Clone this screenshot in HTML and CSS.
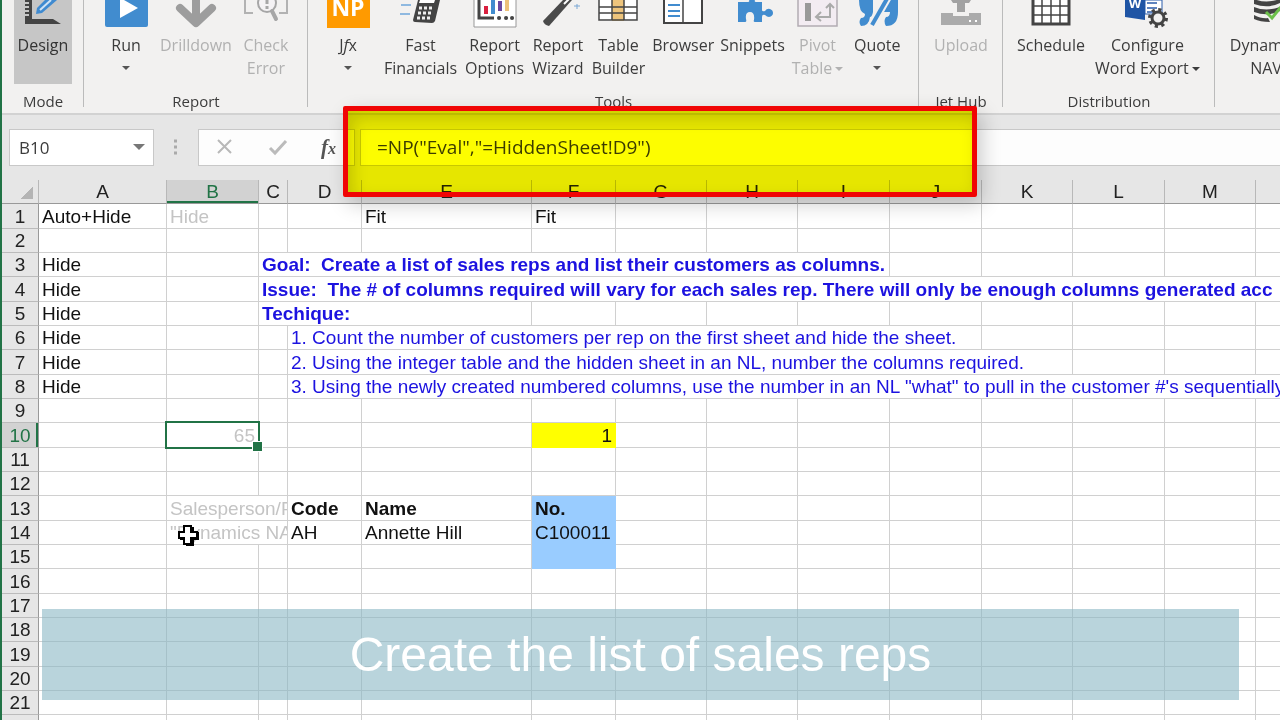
FILE: index.html
```html
<!DOCTYPE html>
<html lang="en">
<head>
<meta charset="UTF-8">
<meta name="viewport" content="width=device-width, initial-scale=1.0">
<title>Create the list of sales reps</title>
<link rel="stylesheet" href="styles.css">
</head>
<body>

<div class="app">

    <div class="ribbon">
        <div class="group group-mode">
            <div class="tools">
                <button class="tool active">
                    <svg width="44" height="28" viewBox="0 0 44 28">
                        <path d="M4 0h7v19h21l8 5H4z" fill="#444"/>
                        <path d="M4 3h4M4 7h4M4 11h4M4 15h4" stroke="#c6c6c6" stroke-width="2"/>
                        <path d="M16 8L24 0h12L21 13l-6 1z" fill="#3f8ad0"/>
                        <path d="M19 10L30 0" stroke="#cfe2f4" stroke-width="2"/>
                    </svg>
                    <span>Design</span>
                </button>
            </div>
            <div class="group-name">Mode</div>
        </div>

        <div class="group group-report">
            <div class="tools">
                <button class="tool w-run">
                    <svg width="44" height="28" viewBox="0 0 44 28">
                        <path d="M1 0h43v25q0 2-2 2H3q-2 0-2-2z" fill="#418ccf"/>
                        <path d="M16 0h4l14 8-18 10z" fill="#fff"/>
                    </svg>
                    <span>Run</span>
                    <span class="arrow"></span>
                </button>
                <button class="tool" disabled>
                    <svg width="44" height="28" viewBox="0 0 44 28">
                        <path d="M22 0v20M6 8l16 15L38 8" fill="none" stroke="#9d9d9d" stroke-width="8" stroke-linejoin="round" stroke-linecap="round"/>
                    </svg>
                    <span>Drilldown</span>
                </button>
                <button class="tool w-check" disabled>
                    <svg width="44" height="28" viewBox="0 0 44 28">
                        <path d="M1 0v13h8M35 13h8V0" fill="none" stroke="#b2b2b2" stroke-width="2"/>
                        <circle cx="23" cy="3" r="9" fill="#f4f2f4" stroke="#a6a6a6" stroke-width="2"/>
                        <path d="M28 11l4 8" stroke="#a6a6a6" stroke-width="4" stroke-linecap="round"/>
                        <path d="M23 0v4M23 6v3" stroke="#a6a6a6" stroke-width="3"/>
                    </svg>
                    <span>Check<br>Error</span>
                </button>
            </div>
            <div class="group-name">Report</div>
        </div>

        <div class="group group-tools">
            <div class="tools">
                <button class="tool w-jfx">
                    <svg width="44" height="28" viewBox="0 0 44 28">
                        <path d="M1 0h43v28H1z" fill="#ff9a00"/>
                        <text x="22" y="16" text-anchor="middle" class="np">NP</text>
                    </svg>
                    <span>J<i>f</i>x</span>
                    <span class="arrow"></span>
                </button>
                <button class="tool">
                    <svg width="44" height="28" viewBox="0 0 44 28">
                        <path d="M19 0h22l-5 21q-1 2-3 2l-17-1q-2 0-2-2z" fill="#444"/>
                        <path d="M21 0h15l-1 3H20z" fill="#fff"/>
                        <path d="M20 8h13M19 13h13M18 18h13" stroke="#eee" stroke-width="3" stroke-dasharray="3 2"/>
                        <path d="M2 5h10M1 14h10" stroke="#8fb9e0" stroke-width="2"/>
                    </svg>
                    <span>Fast<br>Financials</span>
                </button>
                <button class="tool">
                    <svg width="44" height="28" viewBox="0 0 44 28">
                        <path d="M1 -2h42v29H1z" fill="#fff" stroke="#999"/>
                        <path d="M6 0v18h15" fill="none" stroke="#444" stroke-width="3"/>
                        <path d="M13 6v8" stroke="#d9203f" stroke-width="4"/>
                        <path d="M20 0v14" stroke="#418ccf" stroke-width="4"/>
                        <path d="M27 1v10" stroke="#6b46a0" stroke-width="4"/>
                        <path d="M34 0v11" stroke="#eec27a" stroke-width="4"/>
                        <path d="M26 18h.1M33 18h.1M39 18h.1" stroke="#444" stroke-width="4" stroke-linecap="round"/>
                    </svg>
                    <span>Report<br>Options</span>
                </button>
                <button class="tool">
                    <svg width="44" height="28" viewBox="0 0 44 28">
                        <path d="M7 21L27 0h9L13 26q-5-1-6-5z" fill="#4a4a4a"/>
                        <path d="M28 4l5-5" stroke="#fff" stroke-width="2"/>
                        <path d="M41 4v5M38 6h6" stroke="#7ba7d4"/>
                    </svg>
                    <span>Report<br>Wizard</span>
                </button>
                <button class="tool">
                    <svg width="44" height="28" viewBox="0 0 44 28">
                        <path d="M3 -2h38v23H3z" fill="#fff"/>
                        <path d="M16 0h12v21H16z" fill="#edc47c"/>
                        <path d="M3 -2v22h38V-2M3 7h38M3 13h38M16 0v20M28 0v20" fill="none" stroke="#444" stroke-width="1.5"/>
                    </svg>
                    <span>Table<br>Builder</span>
                </button>
                <button class="tool tight">
                    <svg width="44" height="28" viewBox="0 0 44 28">
                        <path d="M3 -2h38v25H3z" fill="#fff" stroke="#444" stroke-width="2"/>
                        <path d="M22 0v23" stroke="#444" stroke-width="1.5"/>
                        <path d="M7 5h12M7 11h12M7 16h12" stroke="#418ccf" stroke-width="2"/>
                    </svg>
                    <span>Browser</span>
                </button>
                <button class="tool tight">
                    <svg width="44" height="28" viewBox="0 0 44 28">
                        <path d="M7 2h10q2 0 1-2h6q-1 2 1 2h6v8q0 2 3 1 2-3 5-2 3 1 3 4t-4 4q-2 0-4-2-3-1-3 2v5H24q-2 0-1-2 1-8-4-8t-4 7q1 3-1 3H7z" fill="#418ccf"/>
                    </svg>
                    <span>Snippets</span>
                </button>
                <button class="tool" disabled>
                    <svg width="44" height="28" viewBox="0 0 44 28">
                        <path d="M2 -2h39v28H2z" fill="#f3ecf2" stroke="#b3acb3" stroke-width="1.5"/>
                        <path d="M12 3v18" stroke="#999" stroke-width="6"/>
                        <path d="M34 4v13H21M30 8l4-4 4 4M25 12l-5 5 5 4" fill="none" stroke="#aaa" stroke-width="2"/>
                    </svg>
                    <span>Pivot<br>Table<span class="arrow inline"></span></span>
                </button>
                <button class="tool w-quote">
                    <svg width="44" height="28" viewBox="0 0 44 28">
                        <path d="M4 0h14v12q-1 5-3 5-1 9-9 9-3-4 0-8 4 0 4-4-6-2-6-14z" fill="#418ccf"/>
                        <path d="M27 0h16v12q0 14-12 14-3-5 0-9 4 0 4-5h-8z" fill="#418ccf"/>
                        <path d="M33 -3L17 25" stroke="#f2f1f0" stroke-width="8"/>
                        <path d="M33 -3L17 25" stroke="#418ccf" stroke-width="4"/>
                    </svg>
                    <span>Quote</span>
                    <span class="arrow"></span>
                </button>
            </div>
            <div class="group-name">Tools</div>
        </div>

        <div class="group group-hub">
            <div class="tools">
                <button class="tool" disabled>
                    <svg width="44" height="28" viewBox="0 0 44 28">
                        <path d="M2 13h12v3h16v-3h12v12H2z" fill="#ababab"/>
                        <path d="M12 0h20l-2 3h-4v9h-8V3h-4z" fill="#a2a2a2"/>
                        <path d="M30 21h2M36 21h2" stroke="#fff" stroke-width="2"/>
                    </svg>
                    <span>Upload</span>
                </button>
            </div>
            <div class="group-name">Jet Hub</div>
        </div>

        <div class="group group-distribution">
            <div class="tools">
                <button class="tool w-schedule">
                    <svg width="44" height="28" viewBox="0 0 44 28">
                        <path d="M4 -3h36v27H4z" fill="#fff" stroke="#444" stroke-width="3"/>
                        <path d="M4 6h36M4 15h36M13 0v24M22 0v24M31 0v24" stroke="#444" stroke-width="1.5"/>
                    </svg>
                    <span>Schedule</span>
                </button>
                <button class="tool">
                    <svg width="44" height="28" viewBox="0 0 44 28">
                        <path d="M20 0h17v14H20z" fill="#fff" stroke="#2b5caa"/>
                        <path d="M22 3h10M22 8h10M22 12h8" stroke="#2b5caa" stroke-width="1.5"/>
                        <path d="M0 0h20v20L0 17z" fill="#1f55a5"/>
                        <text x="10" y="8" text-anchor="middle" class="word-mark">W</text>
                        <circle cx="33" cy="18" r="8" fill="none" stroke="#444" stroke-width="4" stroke-dasharray="3 3.28"/>
                        <circle cx="33" cy="18" r="6" fill="#f2f1f0" stroke="#444" stroke-width="3"/>
                    </svg>
                    <span>Configure<br>Word Export<span class="arrow inline"></span></span>
                </button>
            </div>
            <div class="group-name">Distribution</div>
        </div>

        <div class="group group-nav">
            <div class="tools">
                <button class="tool">
                    <svg width="44" height="28" viewBox="0 0 44 28">
                        <path d="M10 -1q12 5 26 0v4q-12 6-26 1zM10 7q12 5 26 0v4q-12 6-26 1zM10 15q8 4 14 3l2 4q-10 0-16-3z" fill="#444"/>
                        <path d="M22 12l6 6L41 2" fill="none" stroke="#6cc04a" stroke-width="3"/>
                    </svg>
                    <span>Dynamics<br>NAV</span>
                </button>
            </div>
        </div>
    </div>

    <div class="formula-bar">
        <div class="name-box">
            <input type="text" value="B10" aria-label="Name box">
            <button aria-label="Named ranges"><span class="arrow big"></span></button>
        </div>
        <svg class="dots" width="4" height="18" viewBox="0 0 4 18"><path d="M0 3h3M0 9h3M0 15h3" stroke="#aaa" stroke-width="3"/></svg>
        <div class="formula-buttons">
            <button aria-label="Cancel">
                <svg width="20" height="20" viewBox="0 0 20 20"><path d="M3 3l13 13M16 3L3 16" stroke="#b8b8b8" stroke-width="2"/></svg>
            </button>
            <button aria-label="Enter">
                <svg width="20" height="20" viewBox="0 0 20 20"><path d="M2 11l5 5L18 4" fill="none" stroke="#bbb" stroke-width="3"/></svg>
            </button>
            <button class="fx" aria-label="Insert function">f<small>x</small></button>
        </div>
        <input class="formula" type="text" value='=NP("Eval","=HiddenSheet!D9")' aria-label="Formula">
    </div>

    <table class="sheet" id="sheet">
        <colgroup>
            <col class="c-head"><col class="c-a"><col class="c-b"><col class="c-c"><col class="c-d"><col class="c-e"><col class="c-f">
            <col class="c-91"><col class="c-91"><col class="c-92"><col class="c-92"><col class="c-91"><col class="c-92"><col class="c-91"><col class="c-92">
        </colgroup>
        <thead>
            <tr>
                <th class="corner"></th>
                <th>A</th><th class="selected">B</th><th>C</th><th>D</th><th>E</th><th>F</th><th>G</th>
                <th>H</th><th>I</th><th>J</th><th>K</th><th>L</th><th>M</th><th>N</th>
            </tr>
        </thead>
        <tbody></tbody>
    </table>

    <svg class="cursor" width="24" height="24" viewBox="0 0 24 24">
        <path d="M9 3h8v5h5v8h-5v6H9v-6H3V9h6z" fill="#000"/>
        <path d="M7 2h7v6h6v6h-6v6H7v-6H2V8h5z" fill="#fff" stroke="#000" stroke-width="2"/>
    </svg>

    <div class="highlight"></div>
    <div class="caption">Create the list of sales reps</div>
</div>

<script>
    // filled cells: row -> column -> [text, class, colspan]
    var cells = {
        1: { A: ["Auto+Hide"], B: ["Hide", "dim"], E: ["Fit"], F: ["Fit"] },
        3: { A: ["Hide"], C: ["Goal:  Create a list of sales reps and list their customers as columns.", "note bold", 7] },
        4: { A: ["Hide"], C: ["Issue:  The # of columns required will vary for each sales rep. There will only be enough columns generated acc", "note bold", 12] },
        5: { A: ["Hide"], C: ["Techique:", "note bold", 3] },
        6: { A: ["Hide"], D: ["1. Count the number of customers per rep on the first sheet and hide the sheet.", "note", 7] },
        7: { A: ["Hide"], D: ["2. Using the integer table and the hidden sheet in an NL, number the columns required.", "note", 8] },
        8: { A: ["Hide"], D: ["3. Using the newly created numbered columns, use the number in an NL \"what\" to pull in the customer #'s sequentially i", "note", 11] },
        10: { B: ["65", "dim number current"], F: ["1", "number yellow"] },
        13: { B: ["Salesperson/P", "dim", 2], D: ["Code", "bold"], E: ["Name", "bold"], F: ["No.", "bold blue"] },
        14: { B: ["\"Dynamics NA", "dim", 2], D: ["AH"], E: ["Annette Hill"], F: ["C100011", "blue"] },
        15: { F: ["", "blue"] }
    };
    var letters = "ABCDEFGHIJKLMN";
    var body = document.querySelector("#sheet tbody");

    for (var r = 1; r <= 22; r++) {
        var row = body.insertRow();
        var head = document.createElement("th");
        head.textContent = r;
        if (r === 10) head.className = "selected";
        row.appendChild(head);

        for (var c = 0; c < letters.length; c++) {
            var cell = row.insertCell();
            var data = (cells[r] || {})[letters[c]];
            if (!data) continue;
            cell.textContent = data[0];
            cell.className = data[1] || "";
            if (data[2]) {
                cell.colSpan = data[2];
                c += data[2] - 1;
            }
        }
    }
</script>

</body>
</html>
```
FILE: styles.css
```css
* {
    box-sizing: border-box;
}
body {
    margin: 0;
    font-family: "Open Sans", "Noto Sans", sans-serif;
    color: #3c3c3c;
    background-color: #fff;
}
button, input {
    font: inherit;
    color: inherit;
    border: none;
    background: none;
    padding: 0;
    margin: 0;
}
.app {
    position: relative;
    height: 100vh;
    overflow: hidden;
    border-left: 2px solid #217346;
}

/* ribbon */
.ribbon {
    display: flex;
    height: 113px;
    overflow: hidden;
    background-color: #f2f1f0;
    font-size: 16px;
    line-height: 23px;
}
.group {
    flex: none;
    position: relative;
    display: flex;
    flex-direction: column;
    justify-content: space-between;
}
.group::after {
    content: "";
    position: absolute;
    right: 0;
    top: 0;
    height: 107px;
    border-right: 1px solid #bbb;
}
.group-mode {
    width: 82px;
}
.group-report {
    width: 224px;
}
.group-tools {
    width: 611px;
}
.group-hub {
    width: 84px;
}
.group-distribution {
    width: 212px;
}
.group-nav {
    width: 102px;
}
.group-name {
    text-align: center;
    font-size: 15px;
}
.tools {
    display: flex;
    justify-content: center;
}
.group-report .tools {
    justify-content: flex-start;
    padding-left: 12px;
}
.group-tools .tools,
.group-distribution .tools {
    justify-content: flex-start;
    padding-left: 8px;
}
.tool {
    display: flex;
    flex-direction: column;
    align-items: center;
    height: 84px;
    padding: 0 4px;
    white-space: nowrap;
    line-height: 23px;
}
.tool.tight {
    padding: 0 3px;
}
.tool svg {
    flex: none;
    margin-bottom: 6px;
}
.tool.active {
    background-color: #c6c6c6;
    color: #333;
}
.tool:disabled {
    color: #b1b1b1;
}
.w-run, .w-check, .w-quote {
    width: 60px;
}
.w-jfx {
    width: 64px;
}
.w-schedule {
    width: 80px;
}
.np {
    font: bold 23px "Open Sans", sans-serif;
    fill: #fff;
}
.word-mark {
    font: bold 13px "Open Sans", sans-serif;
    fill: #fff;
}
.arrow {
    margin-top: 9px;
    border: 4px solid transparent;
    border-top-color: #555;
    border-bottom: none;
}
.arrow.inline {
    display: inline-block;
    margin: 0 0 3px 3px;
    border-top-color: currentColor;
}
.arrow.big {
    display: block;
    margin: 0;
    border-width: 6px 6px 0;
    border-top-color: #777;
}

/* formula bar */
.formula-bar {
    display: flex;
    align-items: center;
    height: 67px;
    padding: 0 0 1px 7px;
    background-color: #e6e6e6;
    border-top: 2px solid #d2d2d2;
}
.name-box {
    display: flex;
    align-items: center;
    width: 145px;
    height: 37px;
    background-color: #fff;
    border: 1px solid #c8c8c8;
}
.name-box input {
    flex: 1;
    min-width: 0;
    padding-left: 9px;
    font-size: 17px;
}
.name-box button {
    padding: 0 8px;
}
.dots {
    margin: 0 20px;
}
.formula-buttons {
    display: flex;
    align-items: center;
    justify-content: space-between;
    width: 157px;
    height: 37px;
    padding: 0 18px 0 16px;
    background-color: #fdfdfd;
    border: 1px solid #c8c8c8;
}
.formula-buttons svg {
    display: block;
}
.fx {
    font: italic bold 21px "Liberation Serif", serif;
    color: #555;
}
.fx small {
    font-size: 16px;
}
.formula {
    flex: 1;
    height: 37px;
    margin-left: 5px;
    padding-left: 16px;
    background-color: #fdfdfd;
    border: 1px solid #c8c8c8;
    border-right: none;
    font-size: 19px;
}

/* worksheet */
.sheet {
    width: 100%;
    table-layout: fixed;
    border-collapse: separate;
    border-spacing: 0;
    font-family: "Liberation Sans", Arial, sans-serif;
    font-size: 19px;
    line-height: 23px;
    color: #111;
}
.c-head { width: 37px; }
.c-a { width: 128px; }
.c-b { width: 92px; }
.c-c { width: 29px; }
.c-d { width: 74px; }
.c-e { width: 170px; }
.c-f { width: 84px; }
.c-91 { width: 91px; }
.c-92 { width: 92px; }
.sheet tr {
    height: 24px;
}
.sheet tbody tr:nth-child(3n+1) {
    height: 25px;
}
.sheet td, .sheet th {
    padding: 0;
    border-right: 1px solid #d0d0d0;
    border-bottom: 1px solid #d0d0d0;
    white-space: pre;
    overflow: hidden;
}
.sheet th {
    background-color: #e6e6e6;
    font-weight: normal;
    text-align: center;
    color: #222;
}
.sheet thead th {
    border-right: 1px solid #b8b8b8;
    border-bottom-color: #999;
}
.sheet tbody th {
    border-right-color: #999;
    border-bottom-color: #bbb;
}
.sheet .corner {
    background: linear-gradient(135deg, transparent 50%, #b4b4b4 50%) 18px 6px / 13px 13px no-repeat #e6e6e6;
}
.sheet thead .selected {
    background-color: #d2d2d2;
    color: #217346;
    box-shadow: inset 0 -2px #217346;
}
.sheet tbody .selected {
    background-color: #d2d2d2;
    color: #217346;
    box-shadow: inset -2px 0 #217346;
}
.sheet td {
    padding-left: 3px;
}
.sheet .dim {
    color: #c4c4c4;
}
.sheet .bold {
    font-weight: bold;
}
.sheet .note {
    color: #1c12e0;
}
.sheet .number {
    text-align: right;
    padding-right: 3px;
}
.sheet .yellow {
    background-color: #ff0;
    border-color: #ff0;
}
.sheet .blue {
    background-color: #99ccff;
    border-color: #99ccff;
}
.sheet .current {
    position: relative;
    overflow: visible;
}
.current::before {
    content: "";
    position: absolute;
    inset: -2px;
    border: 2px solid #217346;
}
.current::after {
    content: "";
    position: absolute;
    right: -5px;
    bottom: -5px;
    width: 9px;
    height: 9px;
    background-color: #217346;
    border: 1px solid #fff;
}

/* things lying over the sheet */
.cursor {
    position: absolute;
    left: 175px;
    top: 524px;
}
.highlight {
    position: absolute;
    left: 341px;
    top: 106px;
    width: 634px;
    height: 91px;
    border: 5px solid #f00505;
    border-radius: 2px;
    box-shadow: 5px 7px 20px rgba(0, 0, 0, 0.2);
}
.highlight::before {
    content: "";
    position: absolute;
    inset: 0;
    background-color: #ff0;
    box-shadow: inset 5px 7px 16px rgba(0, 0, 0, 0.16);
    mix-blend-mode: multiply;
}
.caption {
    position: absolute;
    left: 40px;
    right: 41px;
    bottom: 20px;
    height: 91px;
    background-color: rgba(138, 183, 197, 0.6);
    color: #fff;
    font-family: "Liberation Sans", Arial, sans-serif;
    font-size: 48px;
    line-height: 91px;
    text-align: center;
}
```
